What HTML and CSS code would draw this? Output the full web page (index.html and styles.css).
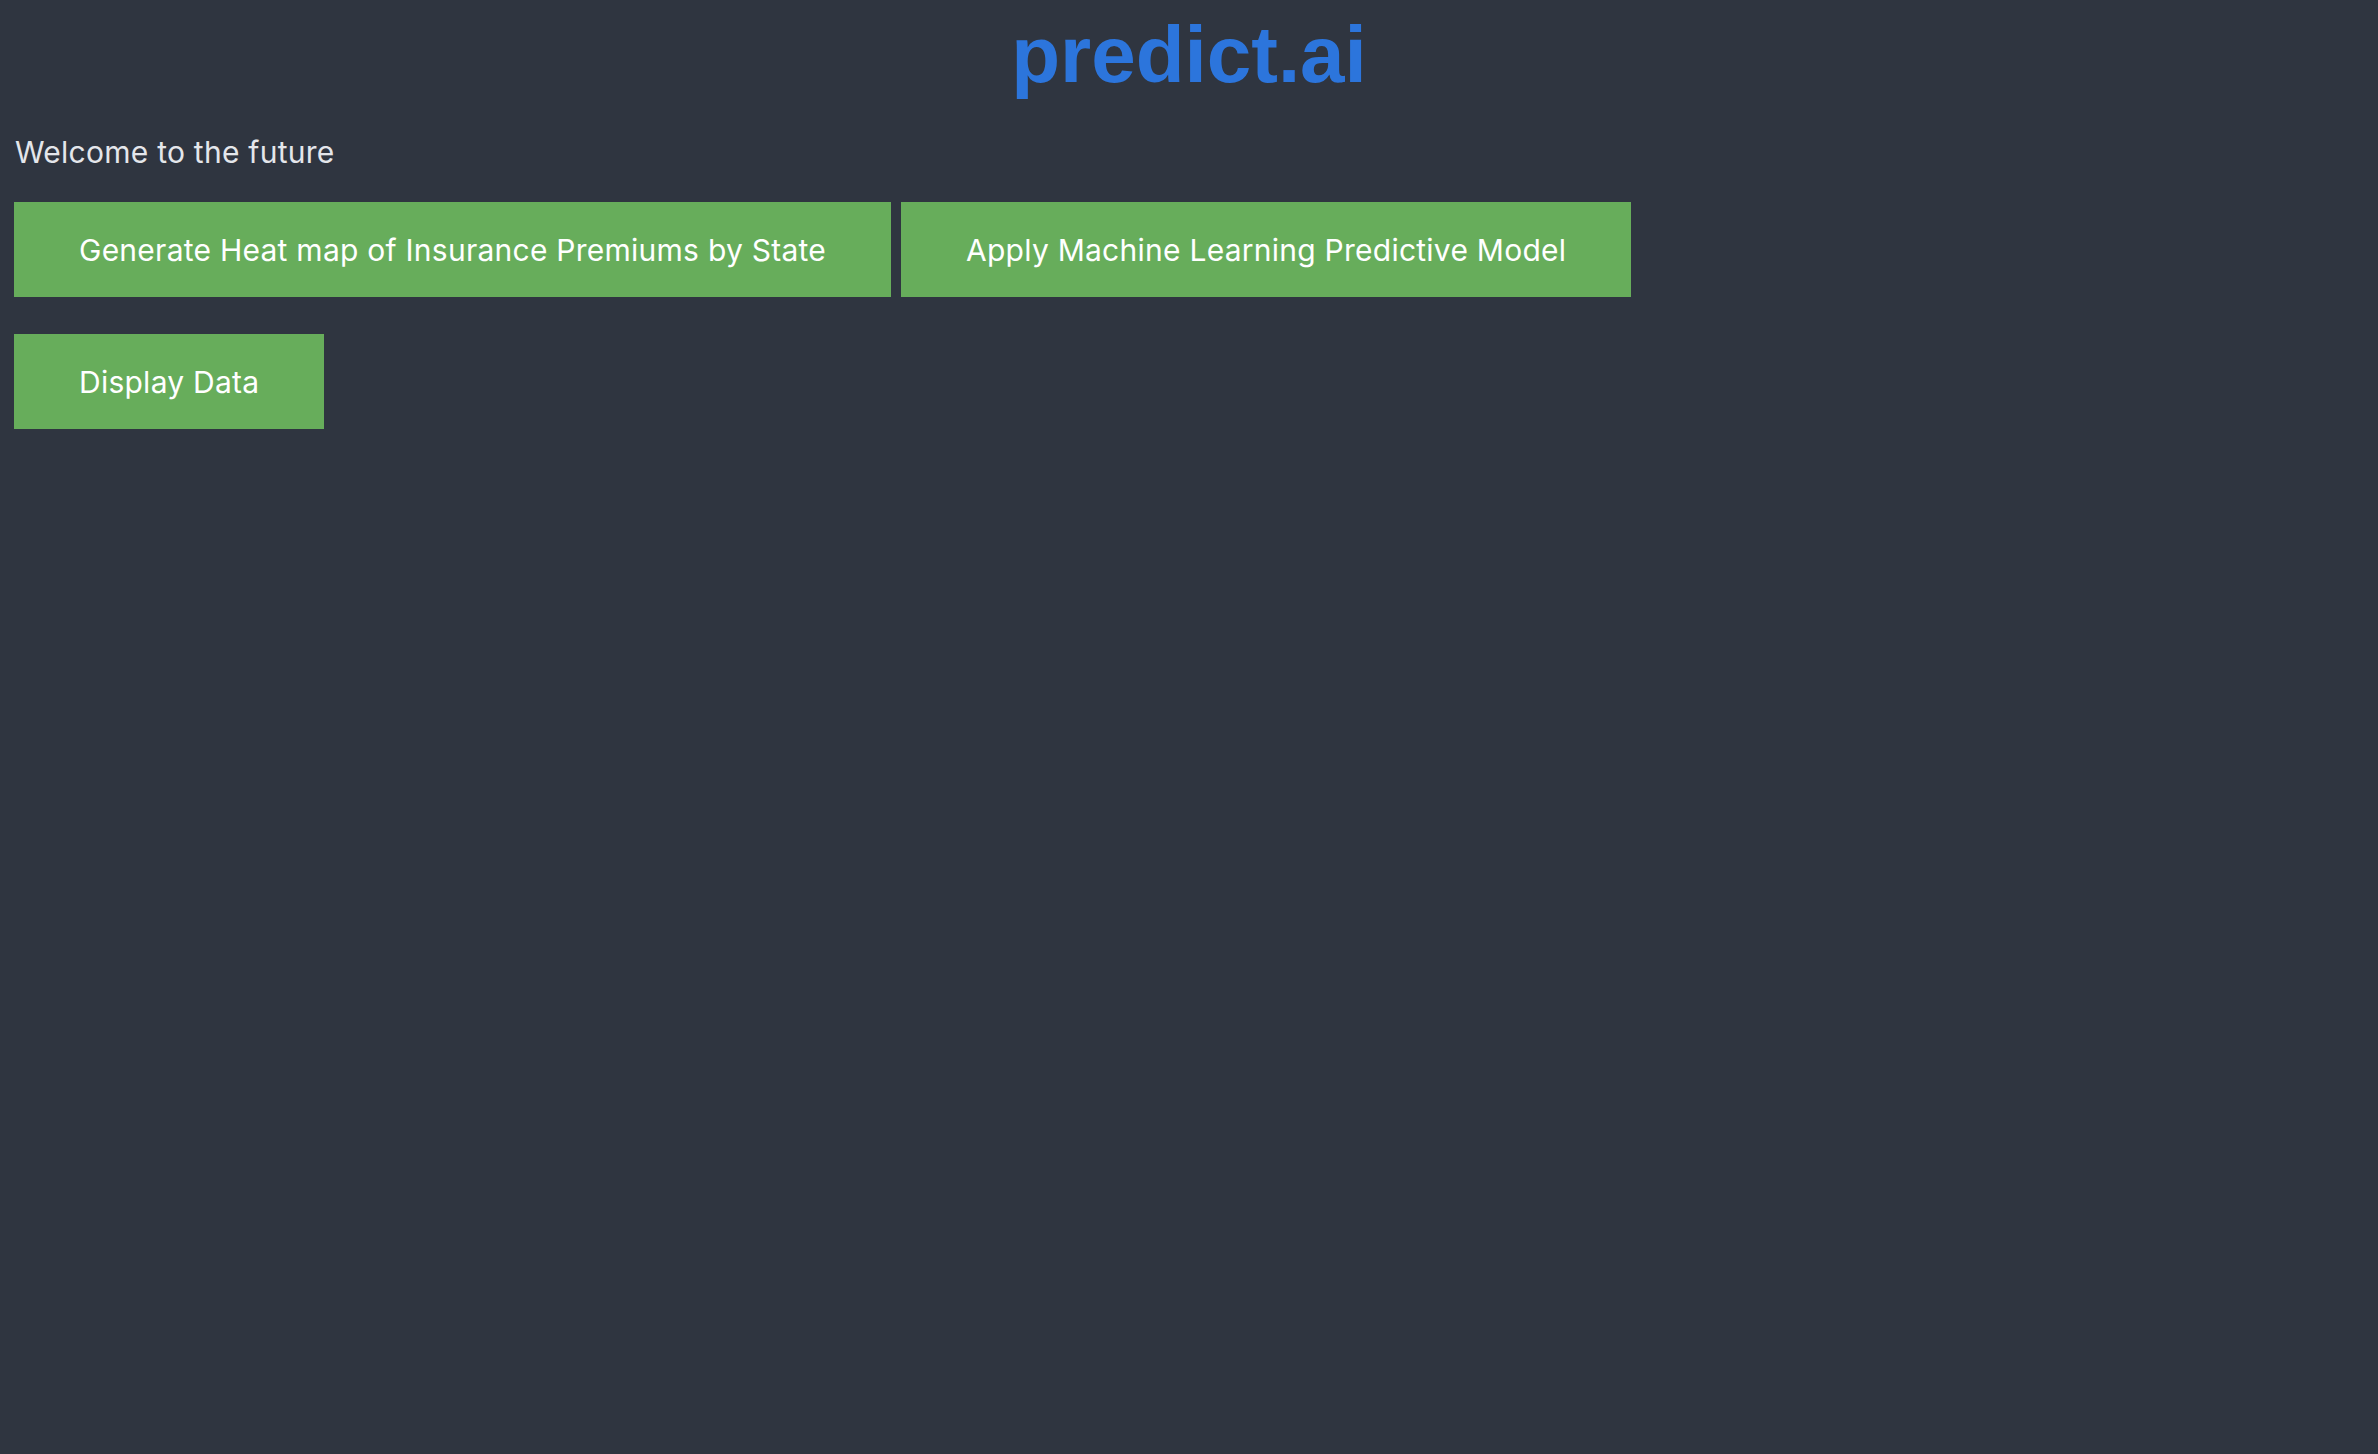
FILE: index.html
```html
<!DOCTYPE html>
<html lang="en">
<head>
<meta charset="utf-8">
<title>predict.ai</title>
<link rel="stylesheet" href="styles.css">
</head>
<body>
<header class="header">
  <h1 class="brand">predict.ai</h1>
</header>
<main class="content">
  <p class="welcome">Welcome to the future</p>
  <div class="actions">
    <div class="action-row">
      <button class="btn" type="button">Generate Heat map of Insurance Premiums by State</button>
      <button class="btn" type="button">Apply Machine Learning Predictive Model</button>
    </div>
    <div class="action-row">
      <button class="btn" type="button">Display Data</button>
    </div>
  </div>
</main>
</body>
</html>
```

FILE: styles.css
```css
html, body {
  margin: 0;
  padding: 0;
  height: 100%;
}

body {
  background: #2f3540;
  font-family: Inter, "Noto Sans", sans-serif;
  color: #e4e6eb;
}

.header {
  display: flex;
  justify-content: center;
  padding-top: 15px;
}

.brand {
  margin: 0;
  font-family: "Liberation Sans", Arial, sans-serif;
  font-weight: bold;
  font-size: 80px;
  line-height: 80px;
  color: #2c75dc;
}

.content {
  padding: 0 14px;
}

.welcome {
  margin: 39px 0 0 1px;
  font-size: 30px;
  line-height: 36px;
  letter-spacing: 0.25px;
}

.actions {
  display: flex;
  flex-direction: column;
  gap: 37px;
  margin-top: 32px;
}

.action-row {
  display: flex;
  gap: 10px;
}

.btn {
  border: 0;
  border-radius: 0;
  background: #67ad5b;
  color: #ffffff;
  font-family: Inter, "Noto Sans", sans-serif;
  font-size: 30px;
  line-height: 36px;
  letter-spacing: 0.25px;
  padding: 30px 65px 29px;
  cursor: pointer;
}
```
